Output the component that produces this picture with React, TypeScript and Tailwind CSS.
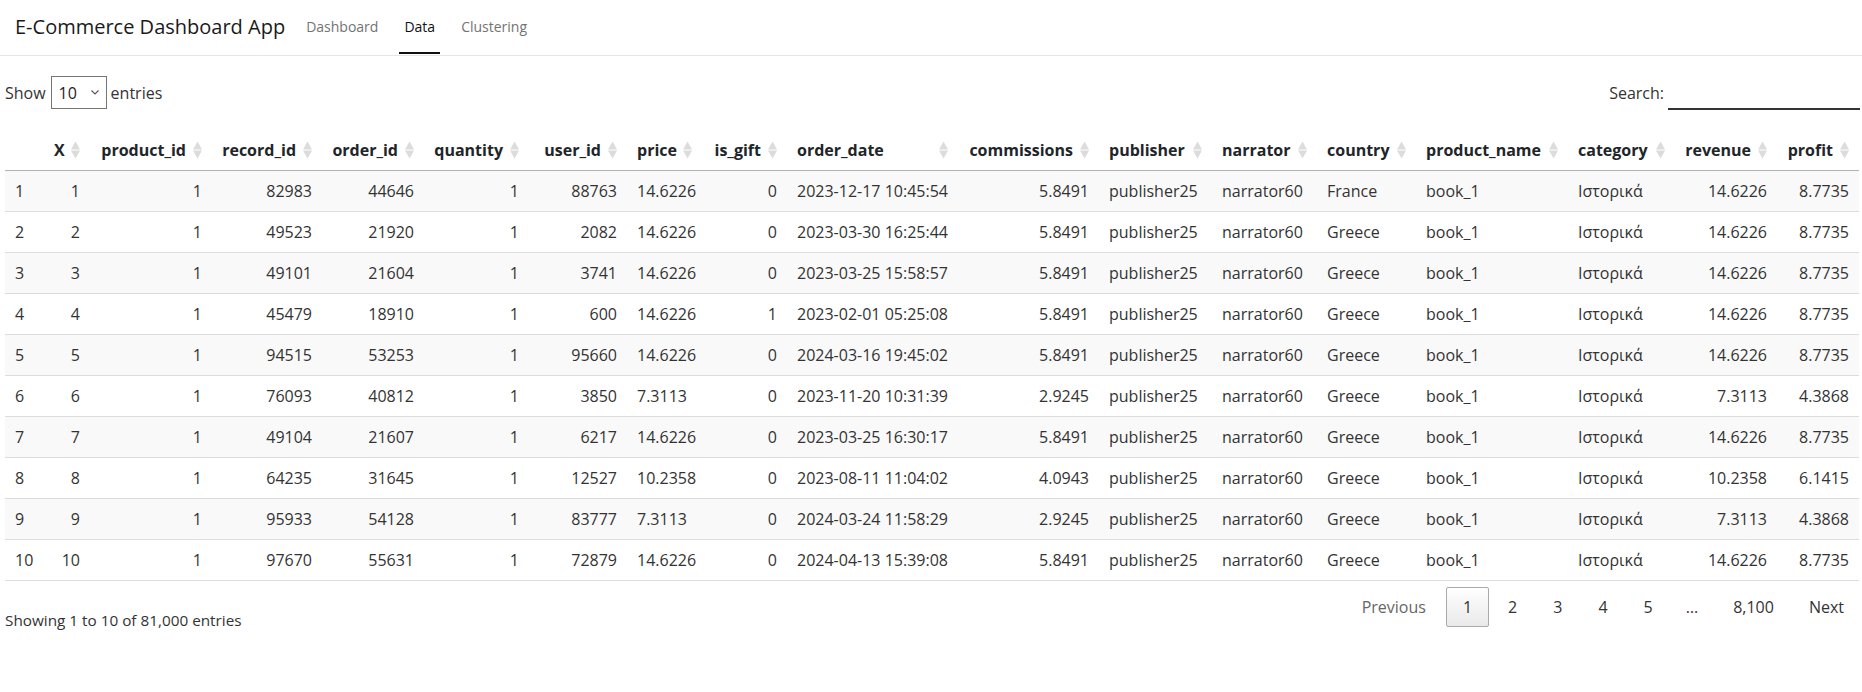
import React from "react";

type Col = { key: string; label: string; w: string; right: boolean; sort: boolean };

const cols: Col[] = [
  { key: "n", label: "", w: "w-[39px]", right: false, sort: false },
  { key: "X", label: "X", w: "w-[46px]", right: true, sort: true },
  { key: "product_id", label: "product_id", w: "w-[122px]", right: true, sort: true },
  { key: "record_id", label: "record_id", w: "w-[110px]", right: true, sort: true },
  { key: "order_id", label: "order_id", w: "w-[102px]", right: true, sort: true },
  { key: "quantity", label: "quantity", w: "w-[105px]", right: true, sort: true },
  { key: "user_id", label: "user_id", w: "w-[98px]", right: true, sort: true },
  { key: "price", label: "price", w: "w-[75px]", right: false, sort: true },
  { key: "is_gift", label: "is_gift", w: "w-[85px]", right: true, sort: true },
  { key: "order_date", label: "order_date", w: "w-[171px]", right: false, sort: true },
  { key: "commissions", label: "commissions", w: "w-[141px]", right: true, sort: true },
  { key: "publisher", label: "publisher", w: "w-[113px]", right: false, sort: true },
  { key: "narrator", label: "narrator", w: "w-[105px]", right: false, sort: true },
  { key: "country", label: "country", w: "w-[99px]", right: false, sort: true },
  { key: "product_name", label: "product_name", w: "w-[152px]", right: false, sort: true },
  { key: "category", label: "category", w: "w-[107px]", right: false, sort: true },
  { key: "revenue", label: "revenue", w: "w-[102px]", right: true, sort: true },
  { key: "profit", label: "profit", w: "w-[82px]", right: true, sort: true },
];

const raw: string[][] = [
  ["82983", "44646", "88763", "14.6226", "0", "2023-12-17 10:45:54", "5.8491", "France", "14.6226", "8.7735"],
  ["49523", "21920", "2082", "14.6226", "0", "2023-03-30 16:25:44", "5.8491", "Greece", "14.6226", "8.7735"],
  ["49101", "21604", "3741", "14.6226", "0", "2023-03-25 15:58:57", "5.8491", "Greece", "14.6226", "8.7735"],
  ["45479", "18910", "600", "14.6226", "1", "2023-02-01 05:25:08", "5.8491", "Greece", "14.6226", "8.7735"],
  ["94515", "53253", "95660", "14.6226", "0", "2024-03-16 19:45:02", "5.8491", "Greece", "14.6226", "8.7735"],
  ["76093", "40812", "3850", "7.3113", "0", "2023-11-20 10:31:39", "2.9245", "Greece", "7.3113", "4.3868"],
  ["49104", "21607", "6217", "14.6226", "0", "2023-03-25 16:30:17", "5.8491", "Greece", "14.6226", "8.7735"],
  ["64235", "31645", "12527", "10.2358", "0", "2023-08-11 11:04:02", "4.0943", "Greece", "10.2358", "6.1415"],
  ["95933", "54128", "83777", "7.3113", "0", "2024-03-24 11:58:29", "2.9245", "Greece", "7.3113", "4.3868"],
  ["97670", "55631", "72879", "14.6226", "0", "2024-04-13 15:39:08", "5.8491", "Greece", "14.6226", "8.7735"],
];

const rows: string[][] = raw.map((r, i) => [
  String(i + 1),
  String(i + 1),
  "1",
  r[0],
  r[1],
  "1",
  r[2],
  r[3],
  r[4],
  r[5],
  r[6],
  "publisher25",
  "narrator60",
  r[7],
  "book_1",
  "Ιστορικά",
  r[8],
  r[9],
]);

function SortIcon() {
  return (
    <svg
      width="9"
      height="17"
      viewBox="0 0 9 17"
      className="absolute right-[10px] top-1/2 -translate-y-1/2"
    >
      <path d="M4.5 0 L9 8 L0 8 Z" fill="#dcdcdc" />
      <path d="M0 9 L9 9 L4.5 17 Z" fill="#dcdcdc" />
    </svg>
  );
}

export default function App() {
  return (
    <div className="min-h-[692px] bg-white font-['Open_Sans','Noto_Sans',sans-serif] text-[16px] leading-[24px] text-[#333]">
      {/* Navbar */}
      <div className="flex h-[56px] items-start border-b border-[#e6e6e6] pl-[15px]">
        <div className="mr-[8px] flex h-[54px] items-center text-[20px] leading-[30px] text-[#1a1a1a]">
          E-Commerce Dashboard App
        </div>
        <div className="mx-[8px] flex h-[54px] items-center border-b-2 border-transparent px-[5px] text-[14px] leading-[21px] text-[#737373]">
          Dashboard
        </div>
        <div className="mx-[8px] flex h-[54px] items-center border-b-2 border-[#111] px-[5px] text-[14px] leading-[21px] text-[#111]">
          Data
        </div>
        <div className="mx-[8px] flex h-[54px] items-center border-b-2 border-transparent px-[5px] text-[14px] leading-[21px] text-[#737373]">
          Clustering
        </div>
      </div>

      <div className="pl-[5px] pr-[2px]">
        {/* Length + search */}
        <div className="mt-[20px] flex h-[33px] items-center justify-between">
          <div className="flex items-center">
            <span>Show</span>
            <div className="ml-[5px] mr-[4px] flex h-[33px] w-[56px] items-center justify-between border border-[#767676] pl-[7px] pr-[7px] text-[#222]">
              <span>10</span>
              <svg width="8" height="5" viewBox="0 0 8 5">
                <path d="M0.5 0.5 L4 4 L7.5 0.5" fill="none" stroke="#555" strokeWidth="1.1" />
              </svg>
            </div>
            <span>entries</span>
          </div>
          <div className="flex items-center">
            <span>Search:</span>
            <div className="ml-[4px] mt-[1px] h-[34px] w-[192px] border-b-2 border-[#333]" />
          </div>
        </div>

        {/* Table */}
        <table className="mt-[21px] w-[1854px] table-fixed border-separate border-spacing-0">
          <colgroup>
            {cols.map((c) => (
              <col key={c.key} className={c.w} />
            ))}
          </colgroup>
          <thead>
            <tr>
              {cols.map((c) => (
                <th
                  key={c.key}
                  className={`relative whitespace-nowrap border-b border-[#b3b3b3] py-[8px] pl-[10px] pr-[26px] font-bold text-[#212529] ${
                    c.right ? "text-right" : "text-left"
                  }`}
                >
                  {c.label}
                  {c.sort && <SortIcon />}
                </th>
              ))}
            </tr>
          </thead>
          <tbody>
            {rows.map((r, i) => (
              <tr key={i} className={i % 2 === 0 ? "bg-[#f9f9f9]" : "bg-white"}>
                {r.map((v, j) => (
                  <td
                    key={j}
                    className={`whitespace-nowrap px-[10px] py-[8px] ${cols[j].right ? "text-right" : "text-left"} ${
                      i > 0 ? "border-t border-[#dddddd]" : ""
                    } ${i === rows.length - 1 ? "border-b border-[#b3b3b3]" : ""}`}
                  >
                    {v}
                  </td>
                ))}
              </tr>
            ))}
          </tbody>
        </table>

        {/* Footer */}
        <div className="flex items-start justify-between">
          <div className="pt-[27px] text-[15.3px]">Showing 1 to 10 of 81,000 entries</div>
          <div className="flex items-center pt-[6px]">
            <span className="ml-[2px] border border-transparent px-[16px] py-[7px] text-[#666]">Previous</span>
            <span className="ml-[3px] rounded-[2px] border border-[#aaaaaa] bg-gradient-to-b from-white to-[#e9e9e9] px-[16px] py-[7px] text-[#333]">
              1
            </span>
            <span className="ml-[2px] border border-transparent px-[16px] py-[7px]">2</span>
            <span className="ml-[2px] border border-transparent px-[16px] py-[7px]">3</span>
            <span className="ml-[2px] border border-transparent px-[16px] py-[7px]">4</span>
            <span className="ml-[2px] border border-transparent px-[16px] py-[7px]">5</span>
            <span className="px-[16px] py-[8px]">…</span>
            <span className="ml-[2px] border border-transparent px-[16px] py-[7px]">8,100</span>
            <span className="ml-[2px] border border-transparent px-[15px] py-[7px]">Next</span>
          </div>
        </div>
      </div>
    </div>
  );
}
